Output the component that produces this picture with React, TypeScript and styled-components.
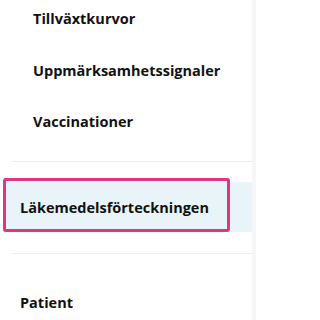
import React from 'react';
import styled, { createGlobalStyle } from 'styled-components';

const GlobalStyle = createGlobalStyle`
  html, body {
    margin: 0;
    padding: 0;
    background: #ffffff;
  }
  body {
    font-family: "Open Sans", "Liberation Sans", sans-serif;
  }
`

const Page = styled.div`
  width: 256px;
  height: 320px;
  display: flex;
  overflow: hidden;
  background: #ffffff;
`

const Menu = styled.nav`
  flex: 1;
  display: flex;
  flex-direction: column;
`

const Edge = styled.div`
  width: 4px;
  background: #f4f6f7;
`

const SubList = styled.div`
  display: flex;
  flex-direction: column;
  margin-top: -7px;
  padding-bottom: 13px;
`

const SubItem = styled.div`
  height: 51.5px;
  display: flex;
  align-items: center;
  padding-left: 33px;
  font-size: 14.5px;
  font-weight: 700;
  color: #111111;
`

const Divider = styled.div`
  height: 1px;
  margin-left: 12px;
  background: #e6eef1;
`

const Section = styled.div`
  padding: 21px 0;
`

const Active = styled.div`
  position: relative;
  height: 50px;
  display: flex;
  align-items: center;
  padding-left: 17px;
  margin-left: 3px;
  background: #e8f4f8;
  font-size: 14.5px;
  font-weight: 700;
  color: #111111;
`

const Highlight = styled.div`
  position: absolute;
  left: 0;
  top: -4px;
  width: 227px;
  height: 54px;
  box-sizing: border-box;
  border: 3px solid #e0357f;
  border-radius: 3px;
`

const TopItem = styled.div`
  height: 40px;
  display: flex;
  align-items: center;
  padding-left: 20px;
  margin-top: 30px;
  font-size: 14.5px;
  font-weight: 700;
  color: #111111;
`

const App = () => {
  return (
    <>
      <GlobalStyle />
      <Page>
        <Menu>
          <SubList>
            <SubItem>Tillväxtkurvor</SubItem>
            <SubItem>Uppmärksamhetssignaler</SubItem>
            <SubItem>Vaccinationer</SubItem>
          </SubList>
          <Divider />
          <Section>
            <Active>
              Läkemedelsförteckningen
              <Highlight />
            </Active>
          </Section>
          <Divider />
          <TopItem>Patient</TopItem>
        </Menu>
        <Edge />
      </Page>
    </>
  );
};

export default App;
